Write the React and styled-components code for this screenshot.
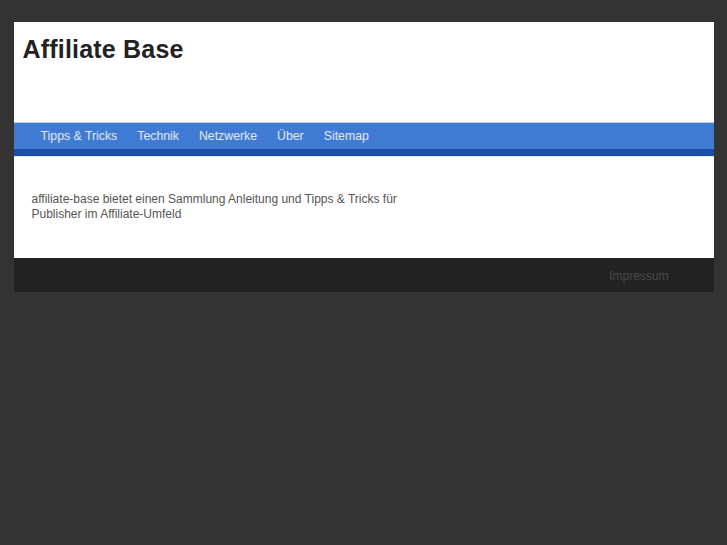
import React from "react";
import styled, { createGlobalStyle } from "styled-components";

const Global = createGlobalStyle`
  html, body { margin: 0; padding: 0; background: #333333; }
  body { font-family: "Liberation Sans", Arial, sans-serif; }
`;

const Page = styled.div`
  width: 700px;
  margin: 22px auto 0;
`;

const Header = styled.header`
  background: #ffffff;
  height: 100px;
  padding: 13px 0 0 9px;
  box-sizing: border-box;
`;

const Title = styled.h1`
  margin: 0;
  font-size: 25px;
  font-weight: bold;
  color: #222222;
  line-height: 28px;
  letter-spacing: 0.2px;
`;

const Nav = styled.nav`
  background: #407bd3;
  border-top: 1px solid #b9cdec;
  border-bottom: 7px solid #1a4ea8;
  height: 25px;
  display: flex;
  align-items: center;
  gap: 20px;
  padding: 1px 0 0 27px;
  box-sizing: content-box;
`;

const NavLink = styled.a`
  color: #e2e9f7;
  font-size: 12.3px;
  text-decoration: none;
  line-height: 25px;
`;

const Content = styled.main`
  background: #ffffff;
  border-top: 1px solid #dfe7f4;
  height: 102px;
  padding: 35px 0 0 18px;
  box-sizing: border-box;
`;

const Intro = styled.p`
  margin: 0;
  width: 380px;
  font-size: 12px;
  line-height: 15px;
  color: #555555;
`;

const Footer = styled.footer`
  background: #222222;
  height: 34px;
  display: flex;
  align-items: center;
  justify-content: flex-end;
  padding-right: 45px;
`;

const FooterLink = styled.a`
  color: #4a4a4a;
  font-size: 12px;
  text-decoration: none;
  padding-top: 1px;
`;

export default function App() {
  return (
    <>
      <Global />
      <Page>
        <Header>
          <Title>Affiliate Base</Title>
        </Header>
        <Nav>
          <NavLink href="#">Tipps &amp; Tricks</NavLink>
          <NavLink href="#">Technik</NavLink>
          <NavLink href="#">Netzwerke</NavLink>
          <NavLink href="#">Über</NavLink>
          <NavLink href="#">Sitemap</NavLink>
        </Nav>
        <Content>
          <Intro>
            affiliate-base bietet einen Sammlung Anleitung und Tipps &amp; Tricks für Publisher im Affiliate-Umfeld
          </Intro>
        </Content>
        <Footer>
          <FooterLink href="#">Impressum</FooterLink>
        </Footer>
      </Page>
    </>
  );
}
